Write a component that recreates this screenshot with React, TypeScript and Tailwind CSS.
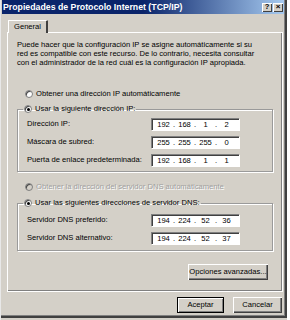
import React from "react";

const font = { fontFamily: '"Liberation Sans", Arial, sans-serif' };

function Radio({ checked, disabled }: { checked?: boolean; disabled?: boolean }) {
  return (
    <span
      className={`relative inline-block w-[8px] h-[8px] rounded-full border border-[#808080] ${
        disabled ? "bg-[#d4d0c8]" : "bg-white"
      } shadow-[inset_1px_1px_0_#404040]`}
    >
      {checked && (
        <span className="absolute left-[2px] top-[2px] w-[3px] h-[3px] rounded-full bg-black" />
      )}
    </span>
  );
}

function IpField({ parts }: { parts: string[] }) {
  return (
    <div className="w-[88px] h-[12px] bg-white border-t border-l border-[#808080] shadow-[1px_1px_0_#fff,inset_1px_1px_0_#404040] flex items-center pl-[3px] text-[7.6px] leading-none text-black">
      {parts.map((p, i) => (
        <React.Fragment key={i}>
          <span className="w-[17px] text-center">{p}</span>
          {i < 3 && <span className="w-[4px] text-center">.</span>}
        </React.Fragment>
      ))}
    </div>
  );
}

function Row({ label, parts }: { label: string; parts: string[] }) {
  return (
    <div className="flex items-center h-[12px] pl-[9px]">
      <span className="w-[124px] text-[7.6px] leading-none">{label}</span>
      <IpField parts={parts} />
    </div>
  );
}

function Button({ children, def, w }: { children: React.ReactNode; def?: boolean; w: string }) {
  return (
    <div
      className={`${w} h-[16px] flex items-center justify-center text-[7.6px] leading-none bg-[#d4d0c8] ${
        def
          ? "border border-black shadow-[inset_1px_1px_0_#fff,inset_-1px_-1px_0_#808080]"
          : "shadow-[inset_1px_1px_0_#fff,inset_-1px_-1px_0_#404040,inset_-2px_-2px_0_#808080]"
      }`}
    >
      {children}
    </div>
  );
}

export default function App() {
  return (
    <div
      className="w-[290px] h-[320px] bg-[#d4d0c8] text-black overflow-hidden flex flex-col border-l border-[#e8e8e8] border-r-[3px] border-r-white"
      style={font}
    >
      <div className="h-[318px] flex flex-col border-r-2 border-b-2 border-[#404040] shadow-[inset_-1px_-1px_0_#808080]">
        {/* Title bar */}
        <div className="h-[14px] mx-[1px] bg-[linear-gradient(90deg,#0a246a_50%,#a6caf0)] flex items-center pl-[1px] pr-[1px]">
          <span className="text-white font-bold text-[8.75px] leading-none">
            Propiedades de Protocolo Internet (TCP/IP)
          </span>
          <div className="ml-auto flex gap-[1px]">
            <div className="w-[10px] h-[9px] bg-[#d4d0c8] shadow-[inset_1px_1px_0_#fff,inset_-1px_-1px_0_#404040] flex items-center justify-center text-[7.5px] font-bold leading-none">
              ?
            </div>
            <div className="w-[10px] h-[9px] bg-[#d4d0c8] shadow-[inset_1px_1px_0_#fff,inset_-1px_-1px_0_#404040] flex items-center justify-center text-[8px] font-bold leading-none">
              ×
            </div>
          </div>
        </div>

        {/* Tab */}
        <div className="mt-[6px] pl-[7px] flex">
          <div className="h-[13px] px-[5px] bg-[#d4d0c8] border-t border-l border-white border-r-2 border-r-[#404040] rounded-t-[1px] flex items-center text-[7.6px] leading-none relative z-10 -mb-[1px]">
            General
          </div>
        </div>

        {/* Panel */}
        <div className="ml-[6px] w-[276px] h-[260px] border-t border-l border-white border-r border-b border-[#404040] shadow-[inset_-1px_-1px_0_#808080] flex flex-col pl-[9px] pr-[9px]">
          <p className="mt-[7px] text-[7.6px] leading-[9px]">
            Puede hacer que la configuración IP se asigne automáticamente si su
            <br />
            red es compatible con este recurso. De lo contrario, necesita consultar
            <br />
            con el administrador de la red cuál es la configuración IP apropiada.
          </p>

          <div className="mt-[22px] ml-[8px] h-[10px] flex items-center gap-[3px] text-[7.6px] leading-none">
            <Radio />
            <span>Obtener una dirección IP automáticamente</span>
          </div>

          <fieldset className="mt-[5px] border border-[#9a9a9a] shadow-[inset_1px_1px_0_#fff,1px_1px_0_#fff] pb-[5px]">
            <legend className="ml-[5px] px-[1px] h-[10px] flex items-center gap-[3px] text-[7.6px] leading-none">
              <Radio checked />
              <span>Usar la siguiente dirección IP:</span>
            </legend>
            <div className="pt-[4px] flex flex-col gap-[6px]">
              <Row label="Dirección IP:" parts={["192", "168", "1", "2"]} />
              <Row label="Máscara de subred:" parts={["255", "255", "255", "0"]} />
              <Row label="Puerta de enlace predeterminada:" parts={["192", "168", "1", "1"]} />
            </div>
          </fieldset>

          <div className="mt-[10px] ml-[8px] h-[10px] flex items-center gap-[3px] text-[7.6px] leading-none">
            <Radio disabled />
            <span className="text-[#a0a0a0] [text-shadow:1px_1px_0_#fff]">
              Obtener la dirección del servidor DNS automáticamente
            </span>
          </div>

          <fieldset className="mt-[6px] border border-[#9a9a9a] shadow-[inset_1px_1px_0_#fff,1px_1px_0_#fff] pb-[6px]">
            <legend className="ml-[5px] px-[1px] h-[10px] flex items-center gap-[3px] text-[7.6px] leading-none">
              <Radio checked />
              <span>Usar las siguientes direcciones de servidor DNS:</span>
            </legend>
            <div className="pt-[6px] flex flex-col gap-[6px]">
              <Row label="Servidor DNS preferido:" parts={["194", "224", "52", "36"]} />
              <Row label="Servidor DNS alternativo:" parts={["194", "224", "52", "37"]} />
            </div>
          </fieldset>

          <div className="mt-[13px] flex justify-end pr-[5px]">
            <Button w="w-[80px]">Opciones avanzadas...</Button>
          </div>
        </div>

        {/* Bottom buttons */}
        <div className="mt-[5px] flex justify-end gap-[9px] pr-[3px]">
          <Button w="w-[47px]" def>
            Aceptar
          </Button>
          <Button w="w-[49px]">Cancelar</Button>
        </div>
      </div>
    </div>
  );
}
